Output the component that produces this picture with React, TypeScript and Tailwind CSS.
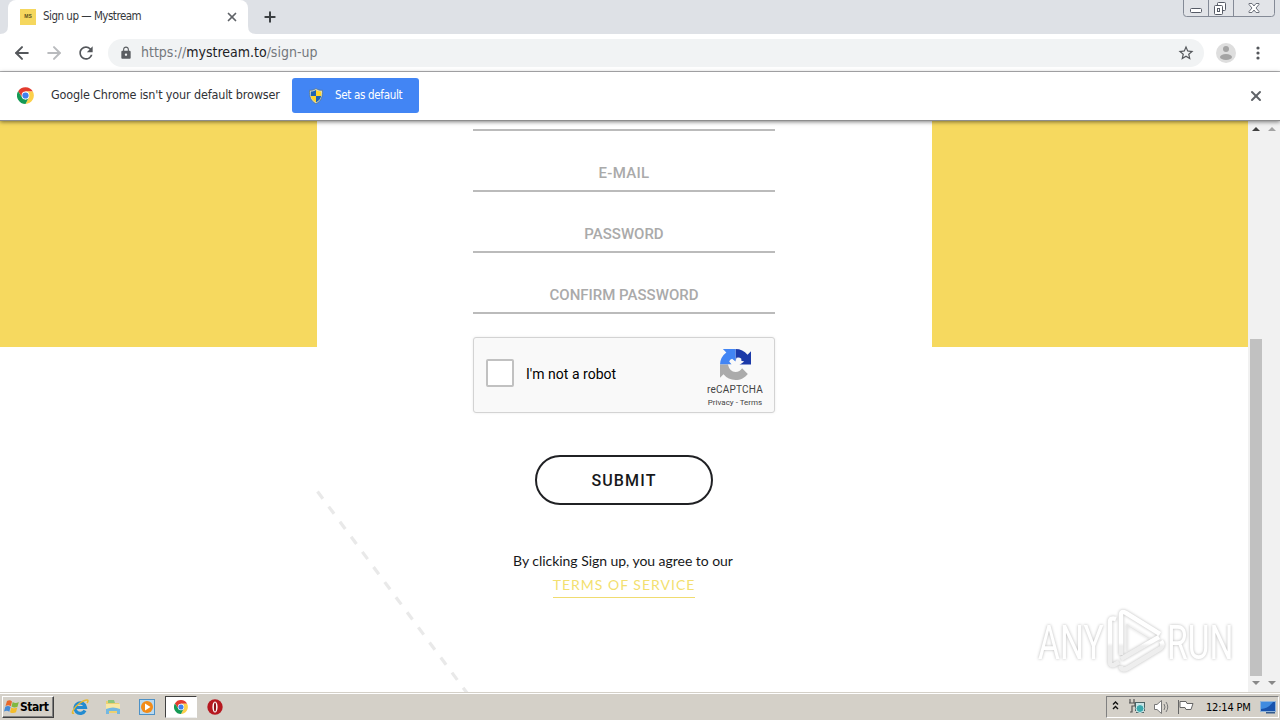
import { ArrowLeft, ArrowRight, Plus, X } from 'lucide-react';
import { MdLock, MdRefresh, MdStarBorder } from 'react-icons/md';

const tahoma = "font-['DejaVu_Sans_Condensed','DejaVu_Sans',sans-serif] [font-stretch:condensed]";

function ChromeLogo({ className }: { className?: string }) {
  return (
    <svg viewBox="0 0 48 48" className={className}>
      <path d="M24 13H44.9A24 24 0 0 0 3.2 12L14.5 29.5Z" fill="#e33b2e" />
      <path d="M33.5 29.5 24 48A24 24 0 0 0 44.9 13H24Z" fill="#fcd04a" />
      <path d="M33.5 29.5 24 48A24 24 0 0 1 3.2 12L14.5 29.5 24 35Z" fill="#159a55" />
      <circle cx="24" cy="24" r="11" fill="#fff" />
      <circle cx="24" cy="24" r="8.8" fill="#3f80ee" />
    </svg>
  );
}

function ShieldIcon() {
  return (
    <svg viewBox="0 0 16 16" className="w-4 h-4">
      <path d="M8 .5C6 2 4 2.4 1.5 2.3 1.3 8.500 2.500 13 8 15.700 13.500 13 14.700 8.500 14.500 2.300 12 2.400 10 2 8 .5Z" fill="#d9dccb" stroke="#55707c" strokeWidth=".7" />
      <path d="M8 2C6 3.200 4.500 3.600 2.800 3.600V8H8Z" fill="#1e63b4" />
      <path d="M8 2C10 3.200 11.500 3.600 13.200 3.600V8H8Z" fill="#ffd52b" />
      <path d="M2.900 8H8V14.400C4.800 12.600 3.300 10.800 2.900 8Z" fill="#ffd52b" />
      <path d="M13.100 8H8V14.400C11.200 12.600 12.700 10.800 13.100 8Z" fill="#1e63b4" />
    </svg>
  );
}

function WindowButtons() {
  return (
    <svg width="96" height="18" viewBox="0 0 96 18" fill="none" className="self-start">
      <path d="M1.500 0V13.500Q1.500 16.500 4.500 16.500H89.500Q92.500 16.500 92.500 13.500V0" fill="#e2e4e8" stroke="#848a96" />
      <path d="M26.500 0V16M51.500 0V16" stroke="#848a96" />
      <rect x="8.500" y="8.500" width="11" height="4" rx="1" fill="#fff" stroke="#565b66" />
      <rect x="35.500" y="2.500" width="8" height="8" rx="1" fill="#fff" stroke="#565b66" />
      <rect x="32.500" y="5.500" width="8" height="9" rx="1" fill="#fff" stroke="#565b66" />
      <rect x="35.500" y="8.500" width="2" height="3" stroke="#565b66" />
      <path d="M67 3.500H70L72 6 74 3.500H77V4.500L74 8 77 11.500V12.500H74L72 10 70 12.500H67V11.500L70 8 67 4.500Z" fill="#fff" stroke="#6c717b" />
    </svg>
  );
}

function TabStrip() {
  return (
    <div className="flex h-[34px] bg-[#dee1e6]">
      <svg width="8" height="34" className="shrink-0">
        <path d="M0 34Q8 34 8 26V34Z" fill="#fff" />
      </svg>
      <div className="flex items-center w-[240px] bg-white rounded-t-lg pl-3 pr-[9px]">
        <div className="flex items-center justify-center w-4 h-4 bg-[#f5d75e] text-[5px] font-bold text-[#5b4f20] font-['Liberation_Sans',sans-serif]">MS</div>
        <span className={`${tahoma} ml-[7px] text-[11.500px] tracking-[-0.500px] text-[#35383c] whitespace-nowrap`}>Sign up — Mystream</span>
        <X className="ml-auto w-[14px] h-[14px] text-[#5f6368]" strokeWidth={3} />
      </div>
      <svg width="8" height="34" className="shrink-0">
        <path d="M8 34Q0 34 0 26V34Z" fill="#fff" />
      </svg>
      <Plus className="mt-[9px] ml-[6px] w-4 h-4 text-[#3c4043]" strokeWidth={3} />
      <div className="flex-1" />
      <WindowButtons />
      <div className="w-[2px]" />
    </div>
  );
}

function Toolbar() {
  return (
    <div className="flex items-center h-[38px] bg-white border-b border-[#b5b6b8] pl-[12px]">
      <ArrowLeft className="w-5 h-5 text-[#54575b]" strokeWidth={2.400} />
      <ArrowRight className="ml-3 w-5 h-5 text-[#b9bbbe]" strokeWidth={2.400} />
      <MdRefresh className="ml-3 w-5 h-5 text-[#54575b]" />
      <div className="flex items-center ml-[12px] w-[1096px] h-7 bg-[#f1f3f4] rounded-full pl-[11px] pr-[9px]">
        <MdLock className="w-[14px] h-[14px] text-[#5a5d61]" />
        <span className={`${tahoma} ml-2 text-[14px] tracking-[0px] text-[#74787c] whitespace-nowrap`}>
          https://<span className="text-[#202124]">mystream.to</span>/sign-up
        </span>
        <MdStarBorder className="ml-auto w-[18px] h-[18px] text-[#54575b]" />
      </div>
      <svg viewBox="0 0 20 20" className="ml-3 w-5 h-5">
        <circle cx="10" cy="10" r="10" fill="#dedede" />
        <circle cx="10" cy="6" r="3" fill="#a4a4a4" />
        <ellipse cx="10" cy="14" rx="6" ry="3" fill="#a4a4a4" />
      </svg>
      <svg viewBox="0 0 4 14" className="ml-[20px] w-1 h-[14px]" fill="#54575b">
        <circle cx="2" cy="2" r="1.600" />
        <circle cx="2" cy="7" r="1.600" />
        <circle cx="2" cy="12" r="1.600" />
      </svg>
    </div>
  );
}

function InfoBar() {
  return (
    <div className="relative z-10 flex items-center h-[49px] bg-white border-b border-[#8d8d8d] pl-[17px] pr-4 pb-px shadow-[0_1px_4px_rgba(0,0,0,0.5)]">
      <ChromeLogo className="w-[17px] h-[17px]" />
      <span className={`${tahoma} ml-[17px] w-[241px] text-[12.500px] tracking-[-0.160px] text-[#303236] whitespace-nowrap`}>Google Chrome isn't your default browser</span>
      <button className="flex items-center w-[127px] h-[35px] pl-4 bg-[#4285f4] rounded-[3px]">
        <ShieldIcon />
        <span className={`${tahoma} ml-[11px] text-[11.500px] tracking-[-0.320px] text-white whitespace-nowrap`}>Set as default</span>
      </button>
      <X className="ml-auto w-4 h-4 text-[#5f6368]" strokeWidth={3} />
    </div>
  );
}

function Field({ label, tracking }: { label: string; tracking: string }) {
  return (
    <div className={`flex items-end justify-center h-[61px] pb-[7px] border-b-2 border-[#bbbbbb] font-['Roboto',sans-serif] font-medium text-[15px] leading-[20px] text-[#aaaaaa] ${tracking}`}>
      {label}
    </div>
  );
}

function RecaptchaLogo() {
  return (
    <svg viewBox="0 0 64 64" className="w-[31px] h-[31px]">
      <path d="M64 32c0-.5 0-.9 0-1.400V4.600l-7.200 7.200A32 32 0 0 0 32 0V28L36 31.900H64" fill="#1c3aa9" />
      <path d="M31.900 0H5.900l7.200 7.200A32 32 0 0 0 0 32H28L31.900 28V0" fill="#4285f4" />
      <path d="M0 32V59.400l7.200-7.200A32 32 0 0 0 32 64c10.400 0 19.600-5 25.400-12.600L45.600 39.500 28 32H0" fill="#ababab" />
      <path d="M17 32 24 32 19 26Q20 21 25 20L32 26 34 18Q40 16 44 20V24L50 26 40 33 45.600 39.500Q41 47 32 47.700 20 47 16.300 32Z" fill="#f9f9f9" />
    </svg>
  );
}

function Recaptcha() {
  return (
    <div className="flex mt-[23px] h-[76px] bg-[#f9f9f9] border border-[#d3d3d3] rounded-[3px] shadow-[0_0_3px_rgba(0,0,0,0.08)]">
      <div className="mt-[21px] ml-3 w-7 h-7 bg-white border-2 border-[#c1c1c1] rounded-[2px]" />
      <span className="mt-[26px] ml-3 font-['Roboto',sans-serif] text-[14px] leading-[20px] tracking-[0.030px] text-black">I'm not a robot</span>
      <div className="flex flex-col items-center ml-auto mr-[7px] w-[64px] mt-[11px] font-['Roboto',sans-serif] text-[#444]">
        <RecaptchaLogo />
        <span className="mt-[4px] text-[10px] leading-[12px] tracking-[0.200px]">reCAPTCHA</span>
        <span className="mt-[1px] text-[8px] leading-[11px] whitespace-nowrap">Privacy - Terms</span>
      </div>
    </div>
  );
}

function Watermark() {
  return (
    <svg className="absolute left-[1030px] top-[484px] [filter:drop-shadow(0_0_1.5px_rgba(0,0,0,0.28))]" width="210" height="76" viewBox="0 0 210 76">
      <defs>
        <linearGradient id="fade" gradientUnits="userSpaceOnUse" x1="0" y1="0" x2="0" y2="76">
          <stop offset="0.5" stopColor="#fff" />
          <stop offset="0.54" stopColor="#eeeeee" />
        </linearGradient>
      </defs>
      <g fill="url(#fade)" className="font-['Roboto',sans-serif] text-[48px] font-normal">
        <text transform="translate(8 54) scale(.7 1)">ANY</text>
        <text transform="translate(137 54) scale(.7 1)">RUN</text>
      </g>
      <g fill="none" strokeWidth="4.500" strokeLinejoin="round" stroke="url(#fade)">
        <path d="M86 14Q80 12 80 17V57Q80 61 84 60L89 57" />
        <path d="M91 50V10Q91 5 96 8L130 29" />
        <path d="M97 19V46M97 20 122 35" strokeWidth="1" stroke="#e7e7e7" />
        <path d="M91 54 129 32M91 61V63Q93 66 98 63L131 43Q134 40 131 36" />
      </g>
    </svg>
  );
}

function Page() {
  return (
    <main className="relative w-[1248px] h-full bg-white overflow-hidden">
      <div className="flex h-full">
        <div className="w-[317px] h-[226px] bg-[#f6d95f]" />
        <div className="flex flex-col ml-[156px] mr-[157px] w-[302px]">
          <div className="h-[10px] border-b-2 border-[#bbbbbb]" />
          <Field label="E-MAIL" tracking="tracking-[0.300px]" />
          <Field label="PASSWORD" tracking="tracking-[0px]" />
          <Field label="CONFIRM PASSWORD" tracking="tracking-[0px]" />
          <Recaptcha />
          <button className="mt-[42px] self-center w-[178px] h-[50px] pt-[2px] border-2 border-[#202124] rounded-full font-['Roboto',sans-serif] font-medium text-[16px] tracking-[1.150px] text-[#17181a]">SUBMIT</button>
          <p className="mt-[44px] pr-[2px] text-center font-['Lato',sans-serif] text-[14px] leading-[24px] tracking-[-0.040px] text-[#17181a] whitespace-nowrap">By clicking Sign up, you agree to our</p>
          <a className="self-center h-[25px] border-b border-[#f0dc70] font-['Lato',sans-serif] text-[14px] leading-[24px] tracking-[1px] text-[#f3df70] whitespace-nowrap">TERMS OF SERVICE</a>
        </div>
        <div className="w-[316px] h-[226px] bg-[#f6d95f]" />
      </div>
      <svg className="absolute left-[310px] top-[365px]" width="170" height="210">
        <path d="M7.500 5.500 160 211" stroke="#e9e9e9" strokeWidth="3.200" strokeDasharray="9 9.800" fill="none" />
      </svg>
      <Watermark />
    </main>
  );
}

function Scrollbars() {
  return (
    <div className="w-8 h-full bg-[#f1f1f1]">
      <svg width="32" height="571">
        <path d="M4 10L8 6L12 10Z" fill="#404040" />
        <path d="M20 10L24 6L28 10Z" fill="#a3a3a3" />
        <rect x="2" y="218" width="12" height="337" fill="#c1c1c1" />
        <path d="M4 560H12L8 564Z" fill="#888" />
        <path d="M20 560H28L24 564Z" fill="#888" />
      </svg>
    </div>
  );
}

function WindowsFlag() {
  return (
    <svg viewBox="0 0 16 16" className="w-4 h-4 shrink-0">
      <path d="M3 2Q6 .5 8 2.500L6.800 7.200Q4.500 5.500 1.500 7Z" fill="#e8682b" />
      <path d="M8.700 3Q11.500 4.800 14.800 3L13.500 7.800Q10.500 9.400 7.500 7.600Z" fill="#80b83f" />
      <path d="M1.300 7.800Q4.200 6.300 6.600 8L5.300 12.700Q3 11 0 12.500Z" fill="#458ad6" />
      <path d="M7.300 8.400Q10.200 10 13.300 8.600L12 13.300Q9 14.900 6 13.200Z" fill="#f4bd2c" />
    </svg>
  );
}

function TrayIcons() {
  return (
    <svg width="94" height="18" viewBox="0 0 94 18" fill="none">
      <path d="M5 6.500 7.500 4 10 6.500M5 11 7.500 8.500 10 11" stroke="#111" strokeWidth="1.400" />
      <path d="M22 1V5M26 1V5M21 5H27V8H24V14H22" stroke="#555" strokeWidth="1.200" />
      <rect x="27.500" y="4.500" width="9" height="8" fill="#c9e5e8" stroke="#4b6264" />
      <path d="M28 14.500H36" stroke="#4b6264" />
      <circle cx="32" cy="10.500" r="4" fill="#3aa9ae" stroke="#d4eeee" />
      <path d="M46.500 6.500H49L53.500 2.500V15.500L49 11.500H46.500Z" fill="#fff" stroke="#777" />
      <path d="M56 6Q58 9 56 12M58 4Q61.500 9 58 14" stroke="#777" />
      <path d="M70.500 2V16M72 3.500H78L79 5.500H85L83 11.500H78L77 9.500H72Z" fill="#fff" stroke="#666" />
    </svg>
  );
}

function Taskbar() {
  return (
    <div className="flex items-center h-[28px] bg-[#d4d0c8] border-t border-[#d4d0c8] shadow-[inset_0_1px_0_#fff] pt-px">
      <button className={`${tahoma} flex items-center ml-[2px] w-[52px] h-[22px] pl-px border border-t-white border-l-white border-r-[#404040] border-b-[#404040] shadow-[inset_-1px_-1px_0_#808080] text-[12px] font-bold text-black tracking-[-0.450px]`}>
        <WindowsFlag />
        Start
      </button>
      <svg viewBox="0 0 18 18" className="ml-[17px] w-[18px] h-[18px]" fill="none">
        <path d="M14 12.500A5.300 5.300 0 1 1 14.500 9.500H5" stroke="#238bd0" strokeWidth="3.200" />
        <path d="M3 15C-1 17 3 9 9 5S19 1 16 5" stroke="#e7b92e" strokeWidth="1.500" />
      </svg>
      <svg viewBox="0 0 18 18" className="ml-[15px] w-[18px] h-[18px]">
        <path d="M2 3H7L8 5H15V15H2Z" fill="#ecd071" />
        <path d="M4 2H10L11 5H4Z" fill="#8cc67c" />
        <path d="M2 6H16V11H2Z" fill="#f8e8a4" />
        <path d="M2 16V11Q9 8 16 11V16H13V13H5V16Z" fill="#73b8e2" />
      </svg>
      <svg viewBox="0 0 18 18" className="ml-4 w-[18px] h-[18px]">
        <rect x="1.500" y="1.500" width="15" height="15" fill="#b9d9f0" stroke="#4d91c6" />
        <circle cx="9" cy="9" r="6" fill="#f28b18" />
        <path d="M7 5.500 12.500 9 7 12.500Z" fill="#fff" />
      </svg>
      <div className="flex items-center justify-center ml-[9px] w-[32px] h-[22px] bg-white border border-t-[#404040] border-l-[#404040] border-r-white border-b-[#eee]">
        <ChromeLogo className="w-[14px] h-[14px]" />
      </div>
      <svg viewBox="0 0 18 18" className="ml-[9px] w-[18px] h-[18px]">
        <circle cx="9" cy="9" r="7.700" fill="#b61820" />
        <ellipse cx="9" cy="9" rx="2.600" ry="5.500" fill="#fff" />
        <ellipse cx="9" cy="9" rx="1.100" ry="4.500" fill="#8d1218" />
      </svg>
      <div className="flex items-center ml-auto mr-[1px] w-[173px] h-[22px] pl-[1px] border border-t-[#808080] border-l-[#808080] border-r-white border-b-white">
        <TrayIcons />
        <span className={`${tahoma} ml-[4px] pt-[2px] w-[50px] text-[11px] tracking-[-0.200px] text-black whitespace-nowrap`}>12:14 PM</span>
        <svg viewBox="0 0 16 16" className="ml-[4px] w-4 h-4">
          <rect x=".5" y="2.500" width="15" height="10" fill="#1853ad" stroke="#8fb3d9" />
          <path d="M1 3H13Q8 10 1 10Z" fill="#3f8be0" />
          <path d="M6 13H15V14.500H6Z" fill="#335a8c" />
        </svg>
      </div>
    </div>
  );
}

export default function App() {
  return (
    <div className="flex flex-col w-[1280px] h-[720px] overflow-hidden bg-white">
      <TabStrip />
      <Toolbar />
      <InfoBar />
      <div className="flex h-[571px]">
        <Page />
        <Scrollbars />
      </div>
      <Taskbar />
    </div>
  );
}
